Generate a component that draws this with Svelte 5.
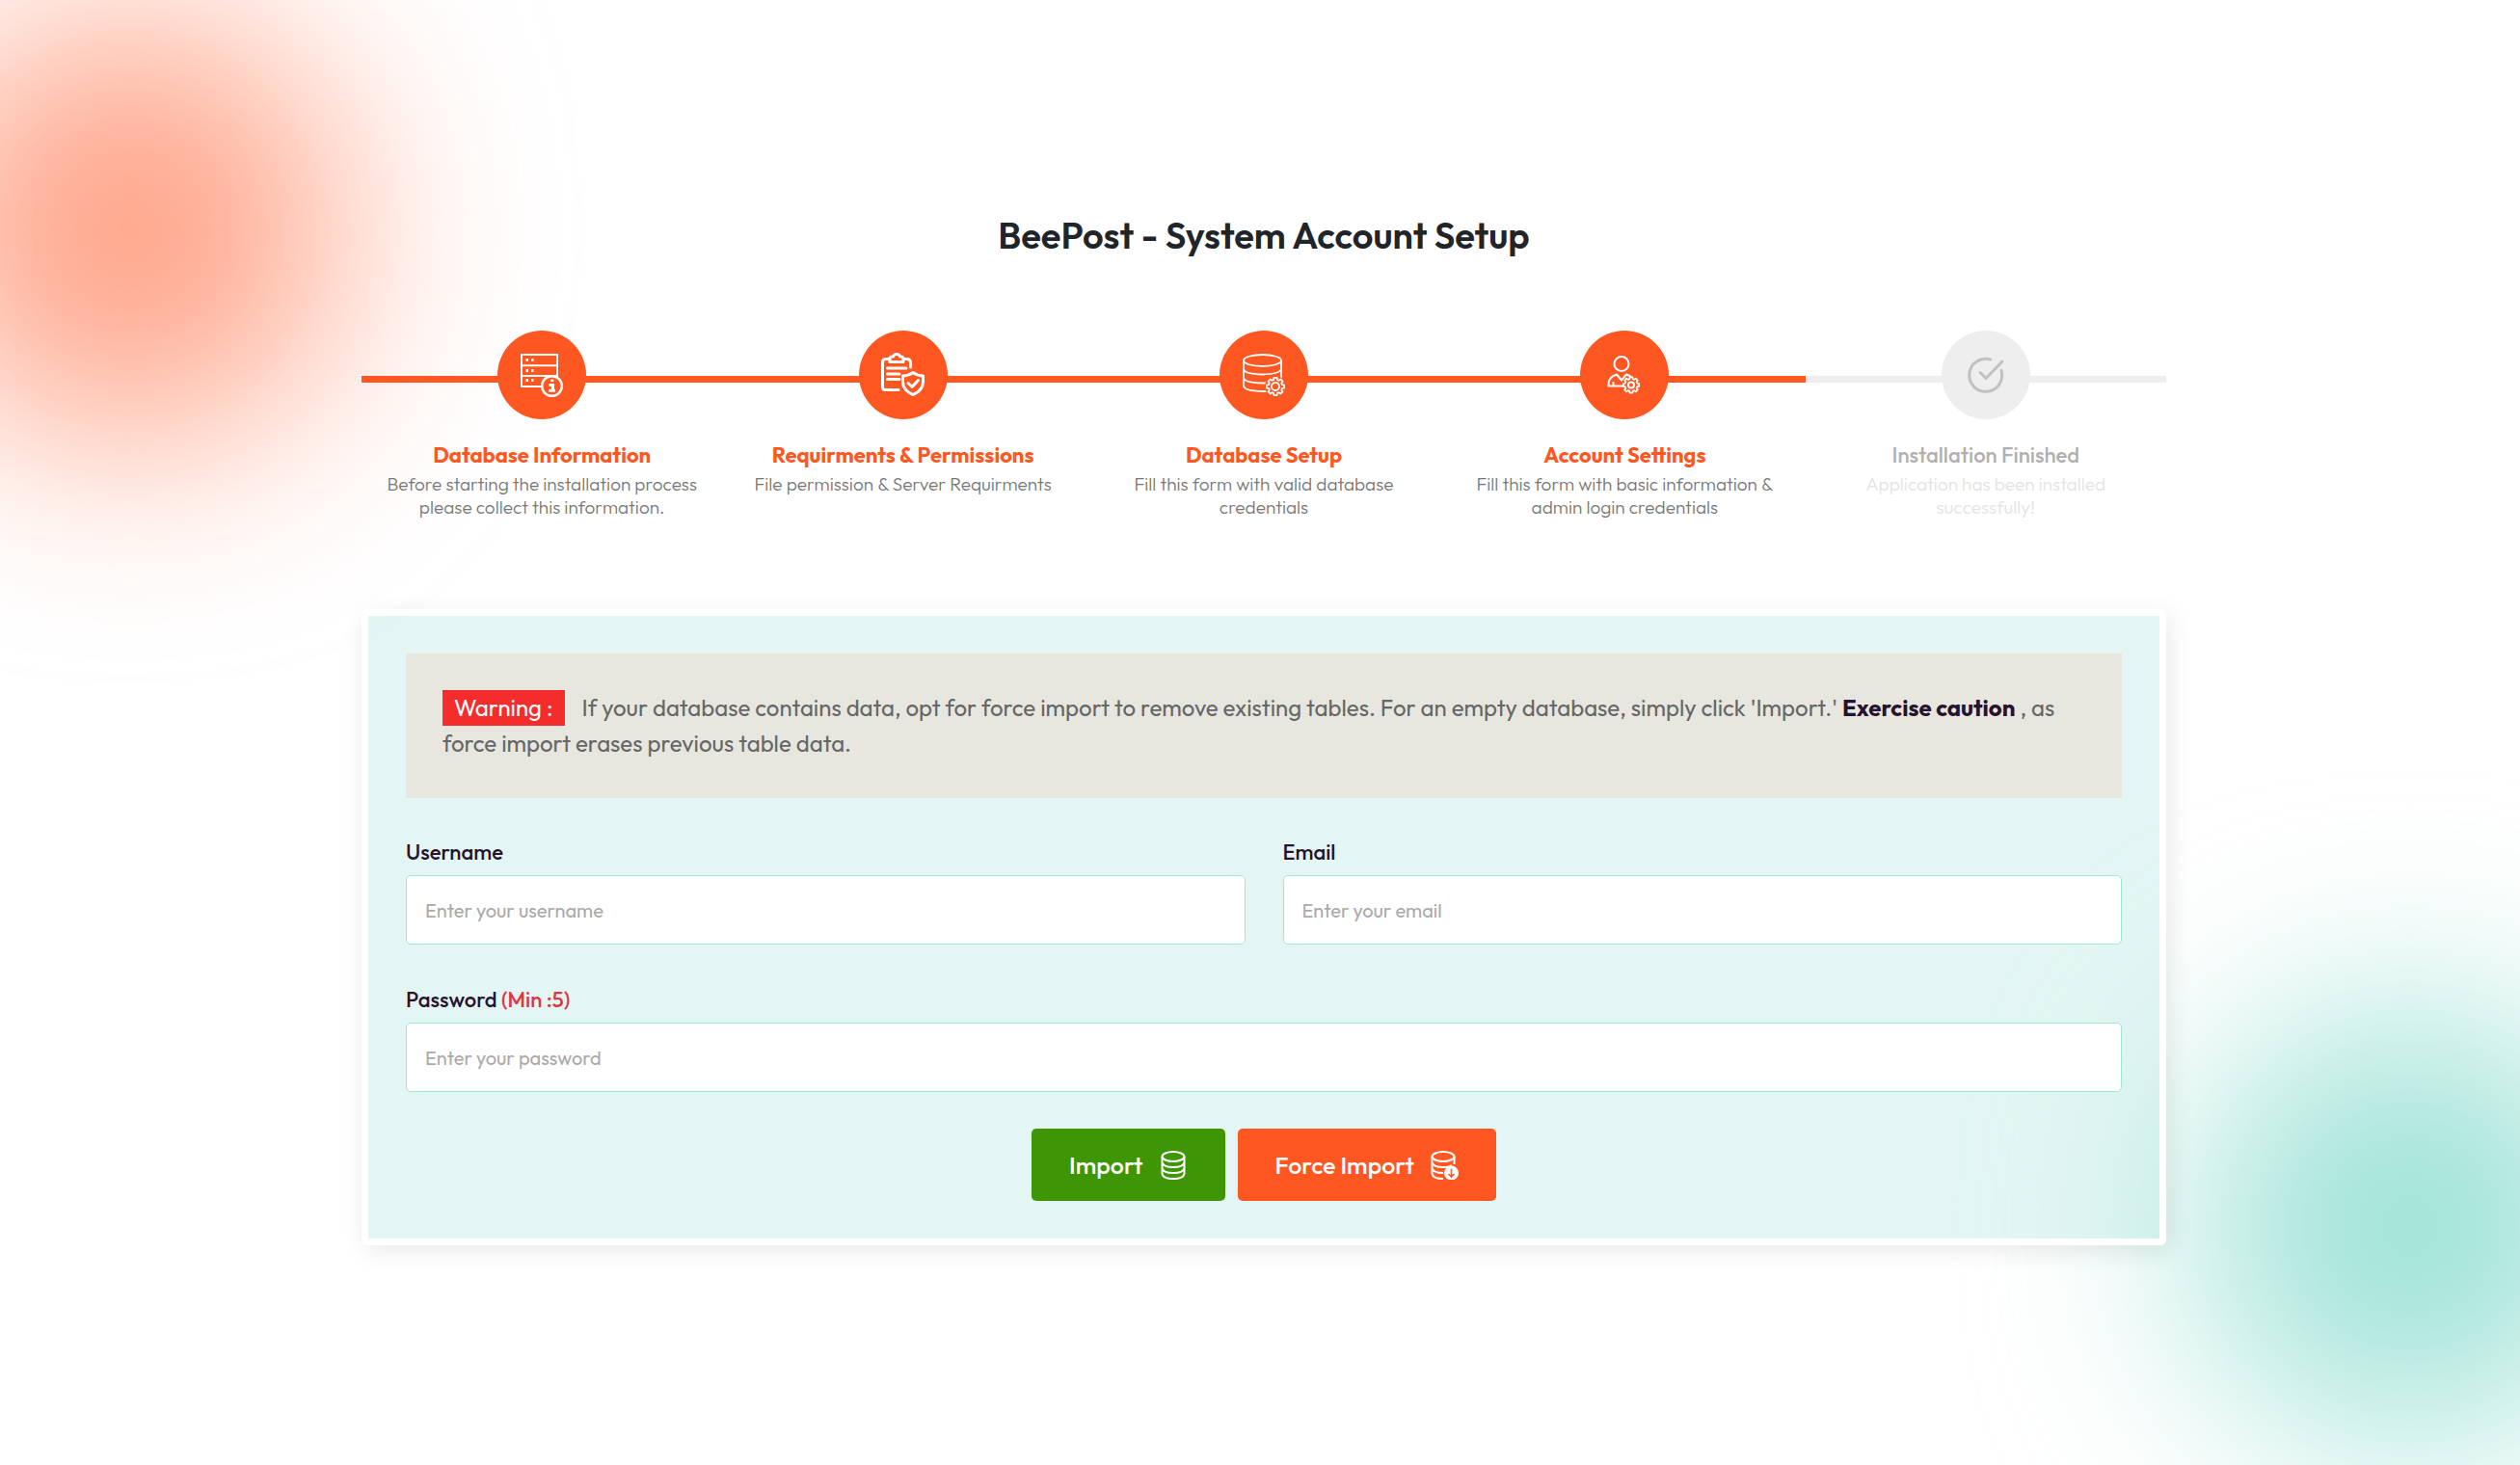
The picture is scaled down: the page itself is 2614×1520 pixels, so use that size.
<script>
  const accent = '#ff5722';
  const gear = (() => {
    const n = 8, pts = [];
    for (let i = 0; i < n; i++) {
      const a = (i * 2 * Math.PI) / n;
      for (const [d, r] of [[-0.27, 7.2], [-0.17, 9.2], [0.17, 9.2], [0.27, 7.2]]) {
        pts.push(`${(r * Math.sin(a + d)).toFixed(2)},${(-r * Math.cos(a + d)).toFixed(2)}`);
      }
    }
    return pts.join(' ');
  })();

  const steps = [
    { icon: 'server', title: 'Database Information', text: 'Before starting the installation process please collect this information.', done: true },
    { icon: 'clipboard', title: 'Requirments & Permissions', text: 'File permission & Server Requirments', done: true },
    { icon: 'database', title: 'Database Setup', text: 'Fill this form with valid database credentials', done: true },
    { icon: 'user', title: 'Account Settings', text: 'Fill this form with basic information & admin login credentials', done: true },
    { icon: 'check', title: 'Installation Finished', text: 'Application has been installed successfully!', done: false }
  ];
</script>

<div class="page">
  <div class="glow glow-orange"></div>
  <div class="glow glow-teal"></div>
  <main>
    <h1>BeePost - System Account Setup</h1>

    <ol class="steps">
      {#each steps as step}
        <li class:done={step.done}>
          <div class="rail">
            <span class="badge">
              <svg viewBox="0 0 92 92" fill="none" stroke="currentColor" aria-hidden="true">
                {#if step.icon === 'server'}
                  <g stroke-width="2">
                    <path d="M25 25H62V58H25Z M25 36.200H62 M25 47H62" />
                    <path d="M29.500 30.500h2.500m3 0h2.500M29.500 41.500h2.500m3 0h2.500M29.500 51.500h2.500m3 0h2.500" stroke-width="2.800" />
                    <circle cx="56.500" cy="57.500" r="10.300" fill={accent} stroke-width="2.400" />
                    <path d="M55 51.800h3.400" stroke-width="2.600" />
                    <path d="M53.500 56.500h4v6M53 62.300h7" stroke-width="3" />
                  </g>
                {:else if step.icon === 'clipboard'}
                  <g stroke-width="3" stroke-linecap="round" stroke-linejoin="round">
                    <path d="M31 29.500H28q-3.500 0-3.500 3.500V58.500q0 3 3 3H41M46.500 29.500h3q4 0 4 4V38" />
                    <path d="M32 32.500v-3q0-2.500 2.500-2.500h1q.5-2.500 3.500-2.500t3.500 2.500h1q2.500 0 2.500 2.500v3z" />
                    <path d="M29.500 39H49M29.500 45H42M29.500 50.500H42" />
                    <path d="M56 43.500q5 3.500 10.500 3.500v6q0 9-10.500 13.500Q45.500 62 45.500 53v-6Q51 47 56 43.500z" fill={accent} />
                    <path d="M51 54.500l4 4 6.500-7" />
                  </g>
                {:else if step.icon === 'database'}
                  <g stroke-width="1.800">
                    <ellipse cx="44.500" cy="31" rx="19.500" ry="6" />
                    <path d="M25 31V57q0 5.500 19.500 6h5M64 31V51M25 39.500q0 5.500 19.500 6 19-.5 19.500-6M25 48.500q0 5.500 19.500 6h5" />
                    <circle cx="58" cy="58" r="11" fill={accent} stroke="none" />
                    <polygon points={gear} transform="translate(58 58)" fill={accent} stroke-linejoin="round" />
                    <circle cx="58" cy="58" r="4" />
                  </g>
                {:else if step.icon === 'user'}
                  <g stroke-width="2" stroke-linejoin="round">
                    <circle cx="43" cy="34.500" r="7.500" />
                    <path d="M46 57.500H29.500V56q0-8 8.500-10.500l5 6 5-6q3.500 1 5.500 3M34.500 57v-4" />
                    <circle cx="53" cy="56.500" r="8.500" fill={accent} stroke="none" />
                    <polygon points={gear} transform="translate(53 56.500) scale(.9)" fill={accent} />
                    <circle cx="53" cy="56.500" r="3" />
                  </g>
                {:else}
                  <g stroke-width="3" stroke-linecap="round" stroke-linejoin="round">
                    <path d="M50.500 30A17 17 0 1 0 62 41.500" />
                    <path d="M40 43.500l6 6 17-17.500" />
                  </g>
                {/if}
              </svg>
            </span>
          </div>
          <h2>{step.title}</h2>
          <p>{step.text}</p>
        </li>
      {/each}
    </ol>

    <form class="card" onsubmit={(e) => e.preventDefault()}>
      <p class="notice">
        <span class="tag">Warning :</span>If your database contains data, opt for force import to remove existing tables. For an empty database, simply click 'Import.' <strong>Exercise caution</strong> , as force import erases previous table data.
      </p>
      <div class="fields">
        <div class="field">
          <label for="username">Username</label>
          <input id="username" type="text" placeholder="Enter your username" />
        </div>
        <div class="field">
          <label for="email">Email</label>
          <input id="email" type="email" placeholder="Enter your email" />
        </div>
        <div class="field wide">
          <label for="password">Password <span>(Min :5)</span></label>
          <input id="password" type="password" placeholder="Enter your password" />
        </div>
      </div>
      <div class="actions">
        <button class="import" type="submit">
          Import
          <svg viewBox="0 0 30 30" fill="none" stroke="currentColor" stroke-width="2" aria-hidden="true">
            <ellipse cx="15" cy="6" rx="11.500" ry="5" />
            <path d="M3.500 6V24q1 5 11.500 5t11.500-5V6M3.500 12q1 5 11.500 5t11.500-5M3.500 18q1 5 11.500 5t11.500-5" />
          </svg>
        </button>
        <button class="force" type="button">
          Force Import
          <svg viewBox="0 0 30 30" fill="none" stroke="currentColor" stroke-width="2" aria-hidden="true">
            <ellipse cx="14" cy="6" rx="11.500" ry="5" />
            <path d="M2.500 6V24q1 5 11.500 5M25.500 6V14M2.500 12q1 5 11.500 5 6 0 9-2M2.500 18q1 5 11.500 5" />
            <circle cx="22.500" cy="23" r="7.500" fill="currentColor" stroke="none" />
            <path d="M22.500 18.500v8M19.500 24l3 3 3-3" stroke={accent} stroke-width="1.600" />
          </svg>
        </button>
      </div>
    </form>
  </main>
</div>

<style>
  :global(body) {
    margin: 0;
    background: #fff;
  }
  .page {
    position: relative;
    min-height: 100vh;
    overflow: hidden;
    box-sizing: border-box;
    padding: 215px 32px 200px 40px;
    font-family: Outfit, Lato, sans-serif;
    color: #666;
  }
  .glow {
    position: absolute;
    width: 440px;
    height: 440px;
    border-radius: 50%;
    filter: blur(110px);
  }
  .glow-orange {
    left: -86px;
    top: 18px;
    background: #ffa286;
  }
  .glow-teal {
    right: -106px;
    bottom: 28px;
    background: #9de2d5;
  }
  main {
    position: relative;
    max-width: 1872px;
    margin: 0 auto;
  }
  h1 {
    margin: 0 0 69px;
    font-size: 38px;
    line-height: 59px;
    font-weight: 600;
    text-align: center;
    color: #212529;
  }
  .steps {
    display: grid;
    grid-template-columns: repeat(5, 1fr);
    margin: 0 0 94px;
    padding: 0;
    list-style: none;
    text-align: center;
  }
  .rail {
    display: flex;
    justify-content: center;
    margin-bottom: 24px;
    background: linear-gradient(#eee, #eee) 0 47px / 100% 7px no-repeat;
  }
  .done .rail {
    background-image: linear-gradient(#ff5722, #ff5722);
  }
  .badge {
    width: 92px;
    height: 92px;
    border-radius: 50%;
    background: #eee;
    color: #c1c1c1;
  }
  .done .badge {
    background: #ff5722;
    color: #fff;
  }
  .badge svg {
    display: block;
  }
  h2 {
    margin: 0 0 4px;
    font-size: 22px;
    line-height: 27px;
    font-weight: 500;
    color: #b0b0b0;
  }
  .done h2 {
    font-weight: 700;
    color: #ff5722;
  }
  .steps p {
    margin: 0;
    padding: 0 20px;
    font-size: 19px;
    line-height: 24px;
    font-weight: 300;
    color: #e3e3e3;
  }
  .steps .done p {
    color: #777;
  }
  .card {
    padding: 39px;
    border: 7px solid #fff;
    border-radius: 6px;
    background: rgba(162, 225, 215, 0.3);
    background-clip: padding-box;
    box-shadow: 4px 6px 26px rgba(0, 0, 0, 0.09);
  }
  .notice {
    margin: 0 0 39px;
    padding: 38px;
    background: #e7e7df;
    font-size: 24px;
    line-height: 37px;
  }
  .tag {
    display: inline-block;
    margin-right: 18px;
    padding: 0 12px;
    background: #f42c2c;
    color: #fff;
  }
  strong {
    font-weight: 700;
    color: #26132f;
  }
  .fields {
    display: grid;
    grid-template-columns: 1fr 1fr;
    gap: 40px 39px;
  }
  .wide {
    grid-column: 1 / -1;
  }
  label {
    display: block;
    margin-bottom: 6px;
    font-size: 22px;
    line-height: 35px;
    font-weight: 500;
    color: #26132f;
  }
  label span {
    color: #dc3545;
  }
  input {
    display: block;
    box-sizing: border-box;
    width: 100%;
    height: 72px;
    padding: 0 19px;
    border: 1px solid #a3e4d7;
    border-radius: 5px;
    background: #fff;
    font-family: inherit;
    font-size: 20px;
    color: #26132f;
  }
  input::placeholder {
    color: #aaa;
  }
  .actions {
    display: flex;
    justify-content: center;
    gap: 13px;
    margin-top: 38px;
  }
  button {
    display: flex;
    align-items: center;
    gap: 16px;
    height: 75px;
    padding: 0 39px;
    border: 0;
    border-radius: 5px;
    font-family: inherit;
    font-size: 25px;
    font-weight: 500;
    color: #fff;
  }
  button svg {
    width: 30px;
    height: 30px;
  }
  .import {
    background: #3e9604;
  }
  .force {
    background: #ff5722;
  }
</style>
